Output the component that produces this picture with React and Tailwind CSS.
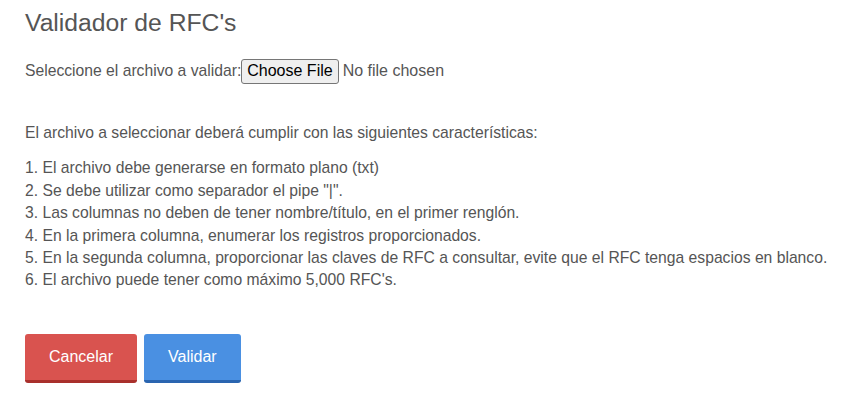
import React from 'react';

const rules = [
  'El archivo debe generarse en formato plano (txt)',
  'Se debe utilizar como separador el pipe "|".',
  'Las columnas no deben de tener nombre/título, en el primer renglón.',
  'En la primera columna, enumerar los registros proporcionados.',
  'En la segunda columna, proporcionar las claves de RFC a consultar, evite que el RFC tenga espacios en blanco.',
  "El archivo puede tener como máximo 5,000 RFC's.",
];

export default function App() {
  return (
    <div className="min-h-screen bg-white px-[25px] pt-[8px] text-[#555] text-[15.7px] leading-[22.4px] font-['Liberation_Sans',Arial,sans-serif]">
      <h1 className="text-[24.7px] leading-[30px] mb-[20px]">Validador de RFC's</h1>

      <div className="flex items-center h-[26px]">
        <label htmlFor="archivo">Seleccione el archivo a validar:</label>
        <input
          id="archivo"
          type="file"
          className="text-[16px] text-[#555] font-['Liberation_Sans',Arial,sans-serif] file:text-[16px] file:text-black file:bg-[#efefef] file:border file:border-solid file:border-[#767676] file:rounded-[3px] file:px-[5px] file:py-0 file:h-[25px] file:mr-[4px] file:font-['Liberation_Sans',Arial,sans-serif]"
        />
      </div>

      <p className="mt-[38px] mb-[13px]">El archivo a seleccionar deberá cumplir con las siguientes características:</p>

      <ol>
        {rules.map((r, i) => (
          <li key={i}>{i + 1}. {r}</li>
        ))}
      </ol>

      <div className="flex gap-[7px] mt-[42px]">
        <button className="bg-[#d9534f] text-white text-[16px] px-[24px] h-[49px] rounded-[3px] border-b-[3px] border-[#a9302c]">Cancelar</button>
        <button className="bg-[#4a90e2] text-white text-[16px] px-[24px] h-[49px] rounded-[3px] border-b-[3px] border-[#2a65b0]">Validar</button>
      </div>
    </div>
  );
}
